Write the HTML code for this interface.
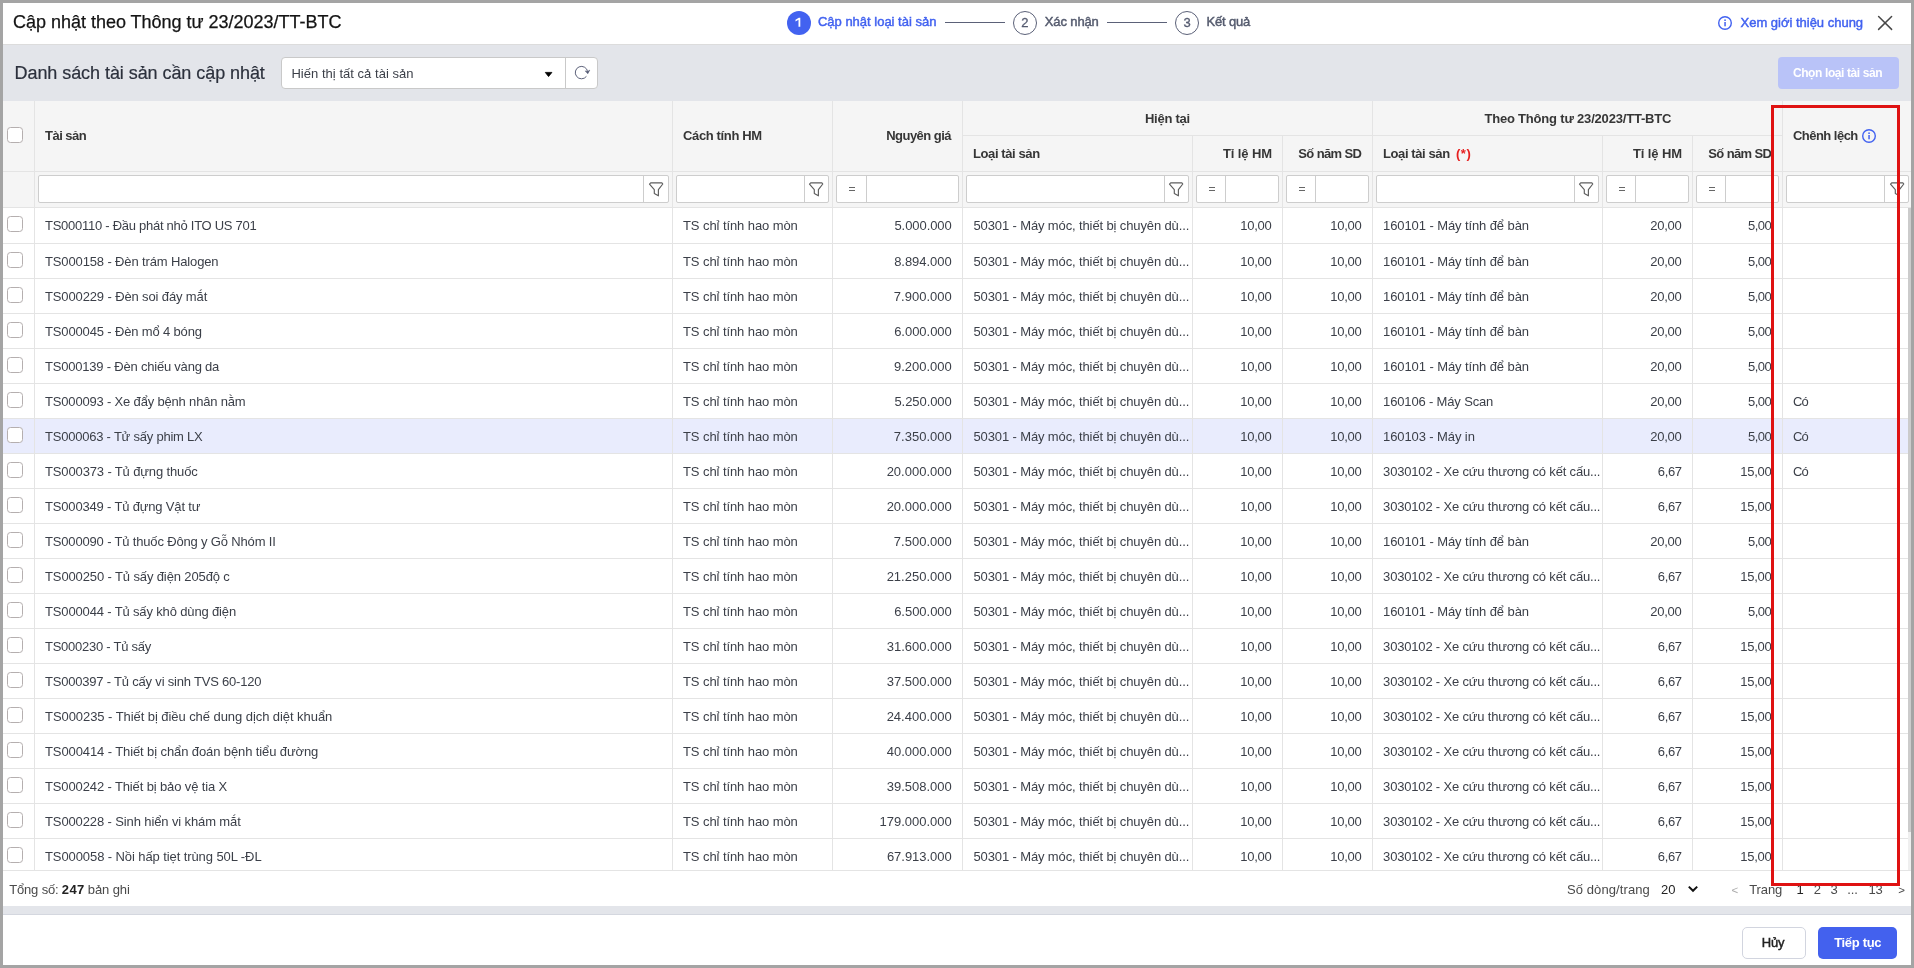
<!DOCTYPE html>
<html><head><meta charset="utf-8"><title>Cập nhật theo Thông tư 23/2023/TT-BTC</title>
<style>
html,body{margin:0;padding:0;}
body{width:1914px;height:968px;position:relative;overflow:hidden;background:#fff;font-family:"Liberation Sans",sans-serif;}
#root{position:absolute;left:0;top:0;width:1914px;height:968px;overflow:hidden;will-change:transform;}
.b{position:absolute;box-sizing:content-box;}
.t{position:absolute;white-space:pre;font-family:"Liberation Sans",sans-serif;}
</style></head><body><div id="root">
<div class="b" style="left:0px;top:0px;width:1914px;height:968px;background:#a4a4a4;"></div>
<div class="b" style="left:3px;top:3px;width:1908px;height:962px;background:#fff;"></div>
<div class="b" style="left:3px;top:44px;width:1908px;height:1px;background:#dcdcdc;"></div>
<div class="b" style="left:3px;top:45px;width:1908px;height:56px;background:#e3e5ea;"></div>
<div class="b" style="left:3px;top:101px;width:1908px;height:107px;background:#f5f5f5;"></div>
<div class="b" style="left:3px;top:906px;width:1908px;height:9px;background:#e3e5ea;"></div>
<div class="b" style="left:3px;top:914px;width:1908px;height:1px;background:#d4d7df;"></div>
<span class="t" style="left:12.99px;top:9.76px;font-size:18px;line-height:24px;font-weight:normal;color:#141414;letter-spacing:-0.013px;-webkit-text-stroke:0.25px #141414;">Cập nhật theo Thông tư 23/2023/TT-BTC</span>
<span class="t" style="left:14.52px;top:60.76px;font-size:18px;line-height:24px;font-weight:normal;color:#2c313d;letter-spacing:-0.063px;-webkit-text-stroke:0.2px #2c313d;">Danh sách tài sản cần cập nhật</span>
<div class="b" style="left:787px;top:11px;width:24px;height:24px;border-radius:12px;background:#4262f0;"></div>
<svg class="b" style="left:790px;top:12px" width="20" height="20" viewBox="790 12 20 20"><path d="M795.5 19.8 L798.8 17.8 L800.3 17.8 L800.3 26.8 L798.5 26.8 L798.5 19.8 L795.5 21.4 Z" fill="#fff"/></svg>
<span class="t" style="left:817.94px;top:11.70px;font-size:13px;line-height:19px;font-weight:normal;color:#4262f0;letter-spacing:-0.003px;-webkit-text-stroke:0.45px #4262f0;">Cập nhật loại tài sản</span>
<div class="b" style="left:945px;top:22px;width:60px;height:1px;background:#5b6178;"></div>
<div class="b" style="left:1013px;top:11px;width:22px;height:22px;border-radius:12px;border:1px solid #5b6178;"></div>
<span class="t" style="left:1021.15px;top:13.00px;font-size:13px;line-height:19px;font-weight:normal;color:#555b70;letter-spacing:0.000px;-webkit-text-stroke:0.3px #555b70;">2</span>
<span class="t" style="left:1044.71px;top:11.70px;font-size:13px;line-height:19px;font-weight:normal;color:#555b6e;letter-spacing:-0.114px;-webkit-text-stroke:0.45px #555b6e;">Xác nhận</span>
<div class="b" style="left:1107px;top:22px;width:60px;height:1px;background:#5b6178;"></div>
<div class="b" style="left:1175px;top:11px;width:22px;height:22px;border-radius:12px;border:1px solid #5b6178;"></div>
<span class="t" style="left:1183.44px;top:13.00px;font-size:13px;line-height:19px;font-weight:normal;color:#555b70;letter-spacing:0.000px;-webkit-text-stroke:0.3px #555b70;">3</span>
<span class="t" style="left:1206.53px;top:11.70px;font-size:13px;line-height:19px;font-weight:normal;color:#555b6e;letter-spacing:-0.174px;-webkit-text-stroke:0.45px #555b6e;">Kết quả</span>
<svg class="b" style="left:1717px;top:15px" width="16" height="16" viewBox="0 0 16 16"><circle cx="8" cy="8" r="6.3" fill="none" stroke="#4262f0" stroke-width="1.4"/><rect x="7.3" y="7" width="1.5" height="4.3" fill="#4262f0"/><rect x="7.3" y="4.4" width="1.5" height="1.6" fill="#4262f0"/></svg>
<span class="t" style="left:1740.51px;top:12.80px;font-size:13px;line-height:19px;font-weight:normal;color:#4262f0;letter-spacing:-0.006px;-webkit-text-stroke:0.45px #4262f0;">Xem giới thiệu chung</span>
<svg class="b" style="left:1877px;top:15px" width="16" height="16" viewBox="0 0 16 16"><path d="M1.6 1.5 L14.6 14.4 M14.6 1.5 L1.6 14.4" stroke="#484848" stroke-width="1.5" stroke-linecap="round" fill="none"/></svg>
<div class="b" style="left:281px;top:57px;width:315px;height:30px;background:#fff;border:1px solid #c9c9c9;border-radius:4px;"></div>
<div class="b" style="left:565px;top:58px;width:1px;height:30px;background:#c9c9c9;"></div>
<span class="t" style="left:291.43px;top:63.80px;font-size:13px;line-height:19px;font-weight:normal;color:#3b3f48;letter-spacing:0.030px;">Hiến thị tất cả tài sản</span>
<svg class="b" style="left:544px;top:71px" width="10" height="7" viewBox="0 0 10 7"><path d="M1.3 1.4 L7.9 1.4 L4.55 5.6 Z" fill="#000" stroke="#000" stroke-width="0.8" stroke-linejoin="round"/></svg>
<svg class="b" style="left:573px;top:64px" width="18" height="18" viewBox="0 0 18 18"><path d="M13.45 12.33 A6.2 6.2 0 1 1 14.64 7.74" fill="none" stroke="#535972" stroke-width="0.95"/><path d="M12.2 6.9 L14.8 9.8 L16.8 6.1 L14.6 7.5 Z" fill="#535972" stroke="#535972" stroke-width="0.5" stroke-linejoin="round"/></svg>
<div class="b" style="left:1778px;top:57px;width:121px;height:32px;background:#b9c3f8;border-radius:4px;"></div>
<span class="t" style="left:1792.91px;top:64.14px;font-size:12px;line-height:18px;font-weight:bold;color:#fff;letter-spacing:-0.392px;">Chọn loại tài sản</span>
<div class="b" style="left:3px;top:419px;width:1908px;height:34px;background:#e9ecfd;"></div>
<div class="b" style="left:34px;top:101px;width:1px;height:770px;background:#e4e4e4;"></div>
<div class="b" style="left:672px;top:101px;width:1px;height:770px;background:#e4e4e4;"></div>
<div class="b" style="left:832px;top:101px;width:1px;height:770px;background:#e4e4e4;"></div>
<div class="b" style="left:962px;top:101px;width:1px;height:770px;background:#e4e4e4;"></div>
<div class="b" style="left:1192px;top:136px;width:1px;height:735px;background:#e4e4e4;"></div>
<div class="b" style="left:1282px;top:136px;width:1px;height:735px;background:#e4e4e4;"></div>
<div class="b" style="left:1372px;top:101px;width:1px;height:770px;background:#e4e4e4;"></div>
<div class="b" style="left:1602px;top:136px;width:1px;height:735px;background:#e4e4e4;"></div>
<div class="b" style="left:1692px;top:136px;width:1px;height:735px;background:#e4e4e4;"></div>
<div class="b" style="left:1782px;top:101px;width:1px;height:770px;background:#e4e4e4;"></div>
<div class="b" style="left:962px;top:135px;width:820px;height:1px;background:#e4e4e4;"></div>
<div class="b" style="left:3px;top:171px;width:1908px;height:1px;background:#e4e4e4;"></div>
<div class="b" style="left:3px;top:207px;width:1908px;height:1px;background:#e4e4e4;"></div>
<div class="b" style="left:3px;top:243px;width:1908px;height:1px;background:#e4e4e4;"></div>
<div class="b" style="left:3px;top:278px;width:1908px;height:1px;background:#e4e4e4;"></div>
<div class="b" style="left:3px;top:313px;width:1908px;height:1px;background:#e4e4e4;"></div>
<div class="b" style="left:3px;top:348px;width:1908px;height:1px;background:#e4e4e4;"></div>
<div class="b" style="left:3px;top:383px;width:1908px;height:1px;background:#e4e4e4;"></div>
<div class="b" style="left:3px;top:418px;width:1908px;height:1px;background:#e4e4e4;"></div>
<div class="b" style="left:3px;top:453px;width:1908px;height:1px;background:#e4e4e4;"></div>
<div class="b" style="left:3px;top:488px;width:1908px;height:1px;background:#e4e4e4;"></div>
<div class="b" style="left:3px;top:523px;width:1908px;height:1px;background:#e4e4e4;"></div>
<div class="b" style="left:3px;top:558px;width:1908px;height:1px;background:#e4e4e4;"></div>
<div class="b" style="left:3px;top:593px;width:1908px;height:1px;background:#e4e4e4;"></div>
<div class="b" style="left:3px;top:628px;width:1908px;height:1px;background:#e4e4e4;"></div>
<div class="b" style="left:3px;top:663px;width:1908px;height:1px;background:#e4e4e4;"></div>
<div class="b" style="left:3px;top:698px;width:1908px;height:1px;background:#e4e4e4;"></div>
<div class="b" style="left:3px;top:733px;width:1908px;height:1px;background:#e4e4e4;"></div>
<div class="b" style="left:3px;top:768px;width:1908px;height:1px;background:#e4e4e4;"></div>
<div class="b" style="left:3px;top:803px;width:1908px;height:1px;background:#e4e4e4;"></div>
<div class="b" style="left:3px;top:838px;width:1908px;height:1px;background:#e4e4e4;"></div>
<div class="b" style="left:3px;top:870px;width:1908px;height:1px;background:#e4e4e4;"></div>
<div class="b" style="left:7px;top:127px;width:14px;height:14px;background:#fff;border:1px solid #b5afaf;border-radius:3.5px;"></div>
<span class="t" style="left:45.11px;top:126.00px;font-size:13px;line-height:19px;font-weight:bold;color:#363636;letter-spacing:-0.536px;">Tài sản</span>
<span class="t" style="left:683.01px;top:126.00px;font-size:13px;line-height:19px;font-weight:bold;color:#363636;letter-spacing:-0.356px;">Cách tính HM</span>
<span class="t" style="left:886.22px;top:126.00px;font-size:13px;line-height:19px;font-weight:bold;color:#363636;letter-spacing:-0.528px;">Nguyên giá</span>
<span class="t" style="left:1144.90px;top:109.00px;font-size:13px;line-height:19px;font-weight:bold;color:#363636;letter-spacing:-0.242px;">Hiện tại</span>
<span class="t" style="left:1484.38px;top:109.00px;font-size:13px;line-height:19px;font-weight:bold;color:#363636;letter-spacing:-0.189px;">Theo Thông tư 23/2023/TT-BTC</span>
<span class="t" style="left:972.96px;top:144.00px;font-size:13px;line-height:19px;font-weight:bold;color:#363636;letter-spacing:-0.393px;">Loại tài sản</span>
<span class="t" style="left:1222.98px;top:144.00px;font-size:13px;line-height:19px;font-weight:bold;color:#363636;letter-spacing:-0.113px;">Tỉ lệ HM</span>
<span class="t" style="left:1298.30px;top:144.00px;font-size:13px;line-height:19px;font-weight:bold;color:#363636;letter-spacing:-0.617px;">Số năm SD</span>
<span class="t" style="left:1382.96px;top:144.00px;font-size:13px;line-height:19px;font-weight:bold;color:#363636;letter-spacing:-0.393px;">Loại tài sản</span>
<span class="t" style="left:1455.95px;top:144.00px;font-size:13px;line-height:19px;font-weight:bold;color:#e62020;letter-spacing:0.559px;">(*)</span>
<span class="t" style="left:1632.98px;top:144.00px;font-size:13px;line-height:19px;font-weight:bold;color:#363636;letter-spacing:-0.113px;">Tỉ lệ HM</span>
<span class="t" style="left:1708.30px;top:144.00px;font-size:13px;line-height:19px;font-weight:bold;color:#363636;letter-spacing:-0.617px;">Số năm SD</span>
<span class="t" style="left:1793.01px;top:126.00px;font-size:13px;line-height:19px;font-weight:bold;color:#363636;letter-spacing:-0.533px;">Chênh lệch</span>
<svg class="b" style="left:1861px;top:128px" width="16" height="16" viewBox="0 0 16 16"><circle cx="8" cy="8" r="6.3" fill="none" stroke="#4262f0" stroke-width="1.4"/><rect x="7.3" y="7" width="1.5" height="4.3" fill="#4262f0"/><rect x="7.3" y="4.4" width="1.5" height="1.6" fill="#4262f0"/></svg>
<div class="b" style="left:38px;top:175px;width:629px;height:26px;background:#fff;border:1px solid #cdcdcd;border-radius:2px;"></div>
<div class="b" style="left:643px;top:176px;width:1px;height:26px;background:#cdcdcd;"></div>
<svg class="b" style="left:648px;top:181px" width="16" height="16" viewBox="0 0 16 16"><path d="M1.5 3.1 L2.7 1.9 L13.9 1.9 L14.8 3 L10.4 8.6 L10.4 14.8 L6.3 12.5 L6.3 8.6 Z" fill="none" stroke="#5e5e5e" stroke-width="1.15" stroke-linejoin="round"/></svg>
<div class="b" style="left:676px;top:175px;width:151px;height:26px;background:#fff;border:1px solid #cdcdcd;border-radius:2px;"></div>
<div class="b" style="left:804px;top:176px;width:1px;height:26px;background:#cdcdcd;"></div>
<svg class="b" style="left:808px;top:181px" width="16" height="16" viewBox="0 0 16 16"><path d="M1.5 3.1 L2.7 1.9 L13.9 1.9 L14.8 3 L10.4 8.6 L10.4 14.8 L6.3 12.5 L6.3 8.6 Z" fill="none" stroke="#5e5e5e" stroke-width="1.15" stroke-linejoin="round"/></svg>
<div class="b" style="left:836px;top:175px;width:121px;height:26px;background:#fff;border:1px solid #cdcdcd;border-radius:2px;"></div>
<div class="b" style="left:866px;top:176px;width:1px;height:26px;background:#cdcdcd;"></div>
<div class="b" style="left:849px;top:187.4px;width:5.5px;height:1.1px;background:#666;"></div>
<div class="b" style="left:849px;top:189.9px;width:5.5px;height:1.1px;background:#666;"></div>
<div class="b" style="left:966px;top:175px;width:221px;height:26px;background:#fff;border:1px solid #cdcdcd;border-radius:2px;"></div>
<div class="b" style="left:1164px;top:176px;width:1px;height:26px;background:#cdcdcd;"></div>
<svg class="b" style="left:1168px;top:181px" width="16" height="16" viewBox="0 0 16 16"><path d="M1.5 3.1 L2.7 1.9 L13.9 1.9 L14.8 3 L10.4 8.6 L10.4 14.8 L6.3 12.5 L6.3 8.6 Z" fill="none" stroke="#5e5e5e" stroke-width="1.15" stroke-linejoin="round"/></svg>
<div class="b" style="left:1196px;top:175px;width:81px;height:26px;background:#fff;border:1px solid #cdcdcd;border-radius:2px;"></div>
<div class="b" style="left:1225px;top:176px;width:1px;height:26px;background:#cdcdcd;"></div>
<div class="b" style="left:1209px;top:187.4px;width:5.5px;height:1.1px;background:#666;"></div>
<div class="b" style="left:1209px;top:189.9px;width:5.5px;height:1.1px;background:#666;"></div>
<div class="b" style="left:1286px;top:175px;width:81px;height:26px;background:#fff;border:1px solid #cdcdcd;border-radius:2px;"></div>
<div class="b" style="left:1315px;top:176px;width:1px;height:26px;background:#cdcdcd;"></div>
<div class="b" style="left:1299px;top:187.4px;width:5.5px;height:1.1px;background:#666;"></div>
<div class="b" style="left:1299px;top:189.9px;width:5.5px;height:1.1px;background:#666;"></div>
<div class="b" style="left:1376px;top:175px;width:221px;height:26px;background:#fff;border:1px solid #cdcdcd;border-radius:2px;"></div>
<div class="b" style="left:1574px;top:176px;width:1px;height:26px;background:#cdcdcd;"></div>
<svg class="b" style="left:1578px;top:181px" width="16" height="16" viewBox="0 0 16 16"><path d="M1.5 3.1 L2.7 1.9 L13.9 1.9 L14.8 3 L10.4 8.6 L10.4 14.8 L6.3 12.5 L6.3 8.6 Z" fill="none" stroke="#5e5e5e" stroke-width="1.15" stroke-linejoin="round"/></svg>
<div class="b" style="left:1606px;top:175px;width:81px;height:26px;background:#fff;border:1px solid #cdcdcd;border-radius:2px;"></div>
<div class="b" style="left:1635px;top:176px;width:1px;height:26px;background:#cdcdcd;"></div>
<div class="b" style="left:1619px;top:187.4px;width:5.5px;height:1.1px;background:#666;"></div>
<div class="b" style="left:1619px;top:189.9px;width:5.5px;height:1.1px;background:#666;"></div>
<div class="b" style="left:1696px;top:175px;width:81px;height:26px;background:#fff;border:1px solid #cdcdcd;border-radius:2px;"></div>
<div class="b" style="left:1725px;top:176px;width:1px;height:26px;background:#cdcdcd;"></div>
<div class="b" style="left:1709px;top:187.4px;width:5.5px;height:1.1px;background:#666;"></div>
<div class="b" style="left:1709px;top:189.9px;width:5.5px;height:1.1px;background:#666;"></div>
<div class="b" style="left:1786px;top:175px;width:121px;height:26px;background:#fff;border:1px solid #cdcdcd;border-radius:2px;"></div>
<div class="b" style="left:1884px;top:176px;width:1px;height:26px;background:#cdcdcd;"></div>
<svg class="b" style="left:1889px;top:181px" width="16" height="16" viewBox="0 0 16 16"><path d="M1.5 3.1 L2.7 1.9 L13.9 1.9 L14.8 3 L10.4 8.6 L10.4 14.8 L6.3 12.5 L6.3 8.6 Z" fill="none" stroke="#5e5e5e" stroke-width="1.15" stroke-linejoin="round"/></svg>
<div class="b" style="left:7px;top:216px;width:14px;height:14px;background:#fff;border:1px solid #b5afaf;border-radius:3.5px;"></div>
<span class="t" style="left:45.03px;top:216.00px;font-size:13px;line-height:19px;font-weight:normal;color:#3b3f48;letter-spacing:-0.270px;">TS000110 - Đầu phát nhỏ ITO US 701</span>
<span class="t" style="left:683.03px;top:216.00px;font-size:13px;line-height:19px;font-weight:normal;color:#3b3f48;letter-spacing:-0.084px;">TS chỉ tính hao mòn</span>
<span class="t" style="left:894.46px;top:216.00px;font-size:13px;line-height:19px;font-weight:normal;color:#3b3f48;letter-spacing:-0.065px;">5.000.000</span>
<span class="t" style="left:973.46px;top:216.00px;font-size:13px;line-height:19px;font-weight:normal;color:#3b3f48;letter-spacing:-0.123px;">50301 - Máy móc, thiết bị chuyên dù...</span>
<span class="t" style="left:1240.31px;top:216.00px;font-size:13px;line-height:19px;font-weight:normal;color:#3b3f48;letter-spacing:-0.268px;">10,00</span>
<span class="t" style="left:1330.31px;top:216.00px;font-size:13px;line-height:19px;font-weight:normal;color:#3b3f48;letter-spacing:-0.268px;">10,00</span>
<span class="t" style="left:1383.10px;top:216.00px;font-size:13px;line-height:19px;font-weight:normal;color:#3b3f48;letter-spacing:-0.098px;">160101 - Máy tính để bàn</span>
<span class="t" style="left:1650.16px;top:216.00px;font-size:13px;line-height:19px;font-weight:normal;color:#3b3f48;letter-spacing:-0.230px;">20,00</span>
<span class="t" style="left:1747.98px;top:216.00px;font-size:13px;line-height:19px;font-weight:normal;color:#3b3f48;letter-spacing:-0.504px;">5,00</span>
<div class="b" style="left:7px;top:252px;width:14px;height:14px;background:#fff;border:1px solid #b5afaf;border-radius:3.5px;"></div>
<span class="t" style="left:45.03px;top:252.00px;font-size:13px;line-height:19px;font-weight:normal;color:#3b3f48;letter-spacing:-0.133px;">TS000158 - Đèn trám Halogen</span>
<span class="t" style="left:683.03px;top:252.00px;font-size:13px;line-height:19px;font-weight:normal;color:#3b3f48;letter-spacing:-0.084px;">TS chỉ tính hao mòn</span>
<span class="t" style="left:894.14px;top:252.00px;font-size:13px;line-height:19px;font-weight:normal;color:#3b3f48;letter-spacing:-0.026px;">8.894.000</span>
<span class="t" style="left:973.46px;top:252.00px;font-size:13px;line-height:19px;font-weight:normal;color:#3b3f48;letter-spacing:-0.123px;">50301 - Máy móc, thiết bị chuyên dù...</span>
<span class="t" style="left:1240.31px;top:252.00px;font-size:13px;line-height:19px;font-weight:normal;color:#3b3f48;letter-spacing:-0.268px;">10,00</span>
<span class="t" style="left:1330.31px;top:252.00px;font-size:13px;line-height:19px;font-weight:normal;color:#3b3f48;letter-spacing:-0.268px;">10,00</span>
<span class="t" style="left:1383.10px;top:252.00px;font-size:13px;line-height:19px;font-weight:normal;color:#3b3f48;letter-spacing:-0.098px;">160101 - Máy tính để bàn</span>
<span class="t" style="left:1650.16px;top:252.00px;font-size:13px;line-height:19px;font-weight:normal;color:#3b3f48;letter-spacing:-0.230px;">20,00</span>
<span class="t" style="left:1747.98px;top:252.00px;font-size:13px;line-height:19px;font-weight:normal;color:#3b3f48;letter-spacing:-0.504px;">5,00</span>
<div class="b" style="left:7px;top:287px;width:14px;height:14px;background:#fff;border:1px solid #b5afaf;border-radius:3.5px;"></div>
<span class="t" style="left:45.03px;top:287.00px;font-size:13px;line-height:19px;font-weight:normal;color:#3b3f48;letter-spacing:-0.129px;">TS000229 - Đèn soi đáy mắt</span>
<span class="t" style="left:683.03px;top:287.00px;font-size:13px;line-height:19px;font-weight:normal;color:#3b3f48;letter-spacing:-0.084px;">TS chỉ tính hao mòn</span>
<span class="t" style="left:893.83px;top:287.00px;font-size:13px;line-height:19px;font-weight:normal;color:#3b3f48;letter-spacing:0.013px;">7.900.000</span>
<span class="t" style="left:973.46px;top:287.00px;font-size:13px;line-height:19px;font-weight:normal;color:#3b3f48;letter-spacing:-0.123px;">50301 - Máy móc, thiết bị chuyên dù...</span>
<span class="t" style="left:1240.31px;top:287.00px;font-size:13px;line-height:19px;font-weight:normal;color:#3b3f48;letter-spacing:-0.268px;">10,00</span>
<span class="t" style="left:1330.31px;top:287.00px;font-size:13px;line-height:19px;font-weight:normal;color:#3b3f48;letter-spacing:-0.268px;">10,00</span>
<span class="t" style="left:1383.10px;top:287.00px;font-size:13px;line-height:19px;font-weight:normal;color:#3b3f48;letter-spacing:-0.098px;">160101 - Máy tính để bàn</span>
<span class="t" style="left:1650.16px;top:287.00px;font-size:13px;line-height:19px;font-weight:normal;color:#3b3f48;letter-spacing:-0.230px;">20,00</span>
<span class="t" style="left:1747.98px;top:287.00px;font-size:13px;line-height:19px;font-weight:normal;color:#3b3f48;letter-spacing:-0.504px;">5,00</span>
<div class="b" style="left:7px;top:322px;width:14px;height:14px;background:#fff;border:1px solid #b5afaf;border-radius:3.5px;"></div>
<span class="t" style="left:45.03px;top:322.00px;font-size:13px;line-height:19px;font-weight:normal;color:#3b3f48;letter-spacing:-0.151px;">TS000045 - Đèn mổ 4 bóng</span>
<span class="t" style="left:683.03px;top:322.00px;font-size:13px;line-height:19px;font-weight:normal;color:#3b3f48;letter-spacing:-0.084px;">TS chỉ tính hao mòn</span>
<span class="t" style="left:894.18px;top:322.00px;font-size:13px;line-height:19px;font-weight:normal;color:#3b3f48;letter-spacing:-0.031px;">6.000.000</span>
<span class="t" style="left:973.46px;top:322.00px;font-size:13px;line-height:19px;font-weight:normal;color:#3b3f48;letter-spacing:-0.123px;">50301 - Máy móc, thiết bị chuyên dù...</span>
<span class="t" style="left:1240.31px;top:322.00px;font-size:13px;line-height:19px;font-weight:normal;color:#3b3f48;letter-spacing:-0.268px;">10,00</span>
<span class="t" style="left:1330.31px;top:322.00px;font-size:13px;line-height:19px;font-weight:normal;color:#3b3f48;letter-spacing:-0.268px;">10,00</span>
<span class="t" style="left:1383.10px;top:322.00px;font-size:13px;line-height:19px;font-weight:normal;color:#3b3f48;letter-spacing:-0.098px;">160101 - Máy tính để bàn</span>
<span class="t" style="left:1650.16px;top:322.00px;font-size:13px;line-height:19px;font-weight:normal;color:#3b3f48;letter-spacing:-0.230px;">20,00</span>
<span class="t" style="left:1747.98px;top:322.00px;font-size:13px;line-height:19px;font-weight:normal;color:#3b3f48;letter-spacing:-0.504px;">5,00</span>
<div class="b" style="left:7px;top:357px;width:14px;height:14px;background:#fff;border:1px solid #b5afaf;border-radius:3.5px;"></div>
<span class="t" style="left:45.03px;top:357.00px;font-size:13px;line-height:19px;font-weight:normal;color:#3b3f48;letter-spacing:-0.209px;">TS000139 - Đèn chiếu vàng da</span>
<span class="t" style="left:683.03px;top:357.00px;font-size:13px;line-height:19px;font-weight:normal;color:#3b3f48;letter-spacing:-0.084px;">TS chỉ tính hao mòn</span>
<span class="t" style="left:894.02px;top:357.00px;font-size:13px;line-height:19px;font-weight:normal;color:#3b3f48;letter-spacing:-0.011px;">9.200.000</span>
<span class="t" style="left:973.46px;top:357.00px;font-size:13px;line-height:19px;font-weight:normal;color:#3b3f48;letter-spacing:-0.123px;">50301 - Máy móc, thiết bị chuyên dù...</span>
<span class="t" style="left:1240.31px;top:357.00px;font-size:13px;line-height:19px;font-weight:normal;color:#3b3f48;letter-spacing:-0.268px;">10,00</span>
<span class="t" style="left:1330.31px;top:357.00px;font-size:13px;line-height:19px;font-weight:normal;color:#3b3f48;letter-spacing:-0.268px;">10,00</span>
<span class="t" style="left:1383.10px;top:357.00px;font-size:13px;line-height:19px;font-weight:normal;color:#3b3f48;letter-spacing:-0.098px;">160101 - Máy tính để bàn</span>
<span class="t" style="left:1650.16px;top:357.00px;font-size:13px;line-height:19px;font-weight:normal;color:#3b3f48;letter-spacing:-0.230px;">20,00</span>
<span class="t" style="left:1747.98px;top:357.00px;font-size:13px;line-height:19px;font-weight:normal;color:#3b3f48;letter-spacing:-0.504px;">5,00</span>
<div class="b" style="left:7px;top:392px;width:14px;height:14px;background:#fff;border:1px solid #b5afaf;border-radius:3.5px;"></div>
<span class="t" style="left:45.03px;top:392.00px;font-size:13px;line-height:19px;font-weight:normal;color:#3b3f48;letter-spacing:-0.178px;">TS000093 - Xe đẩy bệnh nhân nằm</span>
<span class="t" style="left:683.03px;top:392.00px;font-size:13px;line-height:19px;font-weight:normal;color:#3b3f48;letter-spacing:-0.084px;">TS chỉ tính hao mòn</span>
<span class="t" style="left:894.46px;top:392.00px;font-size:13px;line-height:19px;font-weight:normal;color:#3b3f48;letter-spacing:-0.065px;">5.250.000</span>
<span class="t" style="left:973.46px;top:392.00px;font-size:13px;line-height:19px;font-weight:normal;color:#3b3f48;letter-spacing:-0.123px;">50301 - Máy móc, thiết bị chuyên dù...</span>
<span class="t" style="left:1240.31px;top:392.00px;font-size:13px;line-height:19px;font-weight:normal;color:#3b3f48;letter-spacing:-0.268px;">10,00</span>
<span class="t" style="left:1330.31px;top:392.00px;font-size:13px;line-height:19px;font-weight:normal;color:#3b3f48;letter-spacing:-0.268px;">10,00</span>
<span class="t" style="left:1383.10px;top:392.00px;font-size:13px;line-height:19px;font-weight:normal;color:#3b3f48;letter-spacing:-0.157px;">160106 - Máy Scan</span>
<span class="t" style="left:1650.16px;top:392.00px;font-size:13px;line-height:19px;font-weight:normal;color:#3b3f48;letter-spacing:-0.230px;">20,00</span>
<span class="t" style="left:1747.98px;top:392.00px;font-size:13px;line-height:19px;font-weight:normal;color:#3b3f48;letter-spacing:-0.504px;">5,00</span>
<span class="t" style="left:1793.10px;top:392.00px;font-size:13px;line-height:19px;font-weight:normal;color:#3b3f48;letter-spacing:-0.876px;">Có</span>
<div class="b" style="left:7px;top:427px;width:14px;height:14px;background:#fff;border:1px solid #b5afaf;border-radius:3.5px;"></div>
<span class="t" style="left:45.03px;top:427.00px;font-size:13px;line-height:19px;font-weight:normal;color:#3b3f48;letter-spacing:-0.222px;">TS000063 - Tử sấy phim LX</span>
<span class="t" style="left:683.03px;top:427.00px;font-size:13px;line-height:19px;font-weight:normal;color:#3b3f48;letter-spacing:-0.084px;">TS chỉ tính hao mòn</span>
<span class="t" style="left:893.83px;top:427.00px;font-size:13px;line-height:19px;font-weight:normal;color:#3b3f48;letter-spacing:0.013px;">7.350.000</span>
<span class="t" style="left:973.46px;top:427.00px;font-size:13px;line-height:19px;font-weight:normal;color:#3b3f48;letter-spacing:-0.123px;">50301 - Máy móc, thiết bị chuyên dù...</span>
<span class="t" style="left:1240.31px;top:427.00px;font-size:13px;line-height:19px;font-weight:normal;color:#3b3f48;letter-spacing:-0.268px;">10,00</span>
<span class="t" style="left:1330.31px;top:427.00px;font-size:13px;line-height:19px;font-weight:normal;color:#3b3f48;letter-spacing:-0.268px;">10,00</span>
<span class="t" style="left:1383.10px;top:427.00px;font-size:13px;line-height:19px;font-weight:normal;color:#3b3f48;letter-spacing:-0.103px;">160103 - Máy in</span>
<span class="t" style="left:1650.16px;top:427.00px;font-size:13px;line-height:19px;font-weight:normal;color:#3b3f48;letter-spacing:-0.230px;">20,00</span>
<span class="t" style="left:1747.98px;top:427.00px;font-size:13px;line-height:19px;font-weight:normal;color:#3b3f48;letter-spacing:-0.504px;">5,00</span>
<span class="t" style="left:1793.10px;top:427.00px;font-size:13px;line-height:19px;font-weight:normal;color:#3b3f48;letter-spacing:-0.876px;">Có</span>
<div class="b" style="left:7px;top:462px;width:14px;height:14px;background:#fff;border:1px solid #b5afaf;border-radius:3.5px;"></div>
<span class="t" style="left:45.03px;top:462.00px;font-size:13px;line-height:19px;font-weight:normal;color:#3b3f48;letter-spacing:-0.137px;">TS000373 - Tủ đựng thuốc</span>
<span class="t" style="left:683.03px;top:462.00px;font-size:13px;line-height:19px;font-weight:normal;color:#3b3f48;letter-spacing:-0.084px;">TS chỉ tính hao mòn</span>
<span class="t" style="left:886.63px;top:462.00px;font-size:13px;line-height:19px;font-weight:normal;color:#3b3f48;letter-spacing:0.008px;">20.000.000</span>
<span class="t" style="left:973.46px;top:462.00px;font-size:13px;line-height:19px;font-weight:normal;color:#3b3f48;letter-spacing:-0.123px;">50301 - Máy móc, thiết bị chuyên dù...</span>
<span class="t" style="left:1240.31px;top:462.00px;font-size:13px;line-height:19px;font-weight:normal;color:#3b3f48;letter-spacing:-0.268px;">10,00</span>
<span class="t" style="left:1330.31px;top:462.00px;font-size:13px;line-height:19px;font-weight:normal;color:#3b3f48;letter-spacing:-0.268px;">10,00</span>
<span class="t" style="left:1383.11px;top:462.00px;font-size:13px;line-height:19px;font-weight:normal;color:#3b3f48;letter-spacing:-0.184px;">3030102 - Xe cứu thương có kết cấu...</span>
<span class="t" style="left:1657.71px;top:462.00px;font-size:13px;line-height:19px;font-weight:normal;color:#3b3f48;letter-spacing:-0.307px;">6,67</span>
<span class="t" style="left:1740.31px;top:462.00px;font-size:13px;line-height:19px;font-weight:normal;color:#3b3f48;letter-spacing:-0.268px;">15,00</span>
<span class="t" style="left:1793.10px;top:462.00px;font-size:13px;line-height:19px;font-weight:normal;color:#3b3f48;letter-spacing:-0.876px;">Có</span>
<div class="b" style="left:7px;top:497px;width:14px;height:14px;background:#fff;border:1px solid #b5afaf;border-radius:3.5px;"></div>
<span class="t" style="left:45.03px;top:497.00px;font-size:13px;line-height:19px;font-weight:normal;color:#3b3f48;letter-spacing:-0.171px;">TS000349 - Tủ đựng Vật tư</span>
<span class="t" style="left:683.03px;top:497.00px;font-size:13px;line-height:19px;font-weight:normal;color:#3b3f48;letter-spacing:-0.084px;">TS chỉ tính hao mòn</span>
<span class="t" style="left:886.63px;top:497.00px;font-size:13px;line-height:19px;font-weight:normal;color:#3b3f48;letter-spacing:0.008px;">20.000.000</span>
<span class="t" style="left:973.46px;top:497.00px;font-size:13px;line-height:19px;font-weight:normal;color:#3b3f48;letter-spacing:-0.123px;">50301 - Máy móc, thiết bị chuyên dù...</span>
<span class="t" style="left:1240.31px;top:497.00px;font-size:13px;line-height:19px;font-weight:normal;color:#3b3f48;letter-spacing:-0.268px;">10,00</span>
<span class="t" style="left:1330.31px;top:497.00px;font-size:13px;line-height:19px;font-weight:normal;color:#3b3f48;letter-spacing:-0.268px;">10,00</span>
<span class="t" style="left:1383.11px;top:497.00px;font-size:13px;line-height:19px;font-weight:normal;color:#3b3f48;letter-spacing:-0.184px;">3030102 - Xe cứu thương có kết cấu...</span>
<span class="t" style="left:1657.71px;top:497.00px;font-size:13px;line-height:19px;font-weight:normal;color:#3b3f48;letter-spacing:-0.307px;">6,67</span>
<span class="t" style="left:1740.31px;top:497.00px;font-size:13px;line-height:19px;font-weight:normal;color:#3b3f48;letter-spacing:-0.268px;">15,00</span>
<div class="b" style="left:7px;top:532px;width:14px;height:14px;background:#fff;border:1px solid #b5afaf;border-radius:3.5px;"></div>
<span class="t" style="left:45.03px;top:532.00px;font-size:13px;line-height:19px;font-weight:normal;color:#3b3f48;letter-spacing:-0.165px;">TS000090 - Tủ thuốc Đông y Gỗ Nhóm II</span>
<span class="t" style="left:683.03px;top:532.00px;font-size:13px;line-height:19px;font-weight:normal;color:#3b3f48;letter-spacing:-0.084px;">TS chỉ tính hao mòn</span>
<span class="t" style="left:893.83px;top:532.00px;font-size:13px;line-height:19px;font-weight:normal;color:#3b3f48;letter-spacing:0.013px;">7.500.000</span>
<span class="t" style="left:973.46px;top:532.00px;font-size:13px;line-height:19px;font-weight:normal;color:#3b3f48;letter-spacing:-0.123px;">50301 - Máy móc, thiết bị chuyên dù...</span>
<span class="t" style="left:1240.31px;top:532.00px;font-size:13px;line-height:19px;font-weight:normal;color:#3b3f48;letter-spacing:-0.268px;">10,00</span>
<span class="t" style="left:1330.31px;top:532.00px;font-size:13px;line-height:19px;font-weight:normal;color:#3b3f48;letter-spacing:-0.268px;">10,00</span>
<span class="t" style="left:1383.10px;top:532.00px;font-size:13px;line-height:19px;font-weight:normal;color:#3b3f48;letter-spacing:-0.098px;">160101 - Máy tính để bàn</span>
<span class="t" style="left:1650.16px;top:532.00px;font-size:13px;line-height:19px;font-weight:normal;color:#3b3f48;letter-spacing:-0.230px;">20,00</span>
<span class="t" style="left:1747.98px;top:532.00px;font-size:13px;line-height:19px;font-weight:normal;color:#3b3f48;letter-spacing:-0.504px;">5,00</span>
<div class="b" style="left:7px;top:567px;width:14px;height:14px;background:#fff;border:1px solid #b5afaf;border-radius:3.5px;"></div>
<span class="t" style="left:45.03px;top:567.00px;font-size:13px;line-height:19px;font-weight:normal;color:#3b3f48;letter-spacing:-0.122px;">TS000250 - Tủ sấy điện 205độ c</span>
<span class="t" style="left:683.03px;top:567.00px;font-size:13px;line-height:19px;font-weight:normal;color:#3b3f48;letter-spacing:-0.084px;">TS chỉ tính hao mòn</span>
<span class="t" style="left:886.63px;top:567.00px;font-size:13px;line-height:19px;font-weight:normal;color:#3b3f48;letter-spacing:0.008px;">21.250.000</span>
<span class="t" style="left:973.46px;top:567.00px;font-size:13px;line-height:19px;font-weight:normal;color:#3b3f48;letter-spacing:-0.123px;">50301 - Máy móc, thiết bị chuyên dù...</span>
<span class="t" style="left:1240.31px;top:567.00px;font-size:13px;line-height:19px;font-weight:normal;color:#3b3f48;letter-spacing:-0.268px;">10,00</span>
<span class="t" style="left:1330.31px;top:567.00px;font-size:13px;line-height:19px;font-weight:normal;color:#3b3f48;letter-spacing:-0.268px;">10,00</span>
<span class="t" style="left:1383.11px;top:567.00px;font-size:13px;line-height:19px;font-weight:normal;color:#3b3f48;letter-spacing:-0.184px;">3030102 - Xe cứu thương có kết cấu...</span>
<span class="t" style="left:1657.71px;top:567.00px;font-size:13px;line-height:19px;font-weight:normal;color:#3b3f48;letter-spacing:-0.307px;">6,67</span>
<span class="t" style="left:1740.31px;top:567.00px;font-size:13px;line-height:19px;font-weight:normal;color:#3b3f48;letter-spacing:-0.268px;">15,00</span>
<div class="b" style="left:7px;top:602px;width:14px;height:14px;background:#fff;border:1px solid #b5afaf;border-radius:3.5px;"></div>
<span class="t" style="left:45.03px;top:602.00px;font-size:13px;line-height:19px;font-weight:normal;color:#3b3f48;letter-spacing:-0.150px;">TS000044 - Tủ sấy khô dùng điện</span>
<span class="t" style="left:683.03px;top:602.00px;font-size:13px;line-height:19px;font-weight:normal;color:#3b3f48;letter-spacing:-0.084px;">TS chỉ tính hao mòn</span>
<span class="t" style="left:894.18px;top:602.00px;font-size:13px;line-height:19px;font-weight:normal;color:#3b3f48;letter-spacing:-0.031px;">6.500.000</span>
<span class="t" style="left:973.46px;top:602.00px;font-size:13px;line-height:19px;font-weight:normal;color:#3b3f48;letter-spacing:-0.123px;">50301 - Máy móc, thiết bị chuyên dù...</span>
<span class="t" style="left:1240.31px;top:602.00px;font-size:13px;line-height:19px;font-weight:normal;color:#3b3f48;letter-spacing:-0.268px;">10,00</span>
<span class="t" style="left:1330.31px;top:602.00px;font-size:13px;line-height:19px;font-weight:normal;color:#3b3f48;letter-spacing:-0.268px;">10,00</span>
<span class="t" style="left:1383.10px;top:602.00px;font-size:13px;line-height:19px;font-weight:normal;color:#3b3f48;letter-spacing:-0.098px;">160101 - Máy tính để bàn</span>
<span class="t" style="left:1650.16px;top:602.00px;font-size:13px;line-height:19px;font-weight:normal;color:#3b3f48;letter-spacing:-0.230px;">20,00</span>
<span class="t" style="left:1747.98px;top:602.00px;font-size:13px;line-height:19px;font-weight:normal;color:#3b3f48;letter-spacing:-0.504px;">5,00</span>
<div class="b" style="left:7px;top:637px;width:14px;height:14px;background:#fff;border:1px solid #b5afaf;border-radius:3.5px;"></div>
<span class="t" style="left:45.03px;top:637.00px;font-size:13px;line-height:19px;font-weight:normal;color:#3b3f48;letter-spacing:-0.256px;">TS000230 - Tủ sấy</span>
<span class="t" style="left:683.03px;top:637.00px;font-size:13px;line-height:19px;font-weight:normal;color:#3b3f48;letter-spacing:-0.084px;">TS chỉ tính hao mòn</span>
<span class="t" style="left:886.80px;top:637.00px;font-size:13px;line-height:19px;font-weight:normal;color:#3b3f48;letter-spacing:-0.011px;">31.600.000</span>
<span class="t" style="left:973.46px;top:637.00px;font-size:13px;line-height:19px;font-weight:normal;color:#3b3f48;letter-spacing:-0.123px;">50301 - Máy móc, thiết bị chuyên dù...</span>
<span class="t" style="left:1240.31px;top:637.00px;font-size:13px;line-height:19px;font-weight:normal;color:#3b3f48;letter-spacing:-0.268px;">10,00</span>
<span class="t" style="left:1330.31px;top:637.00px;font-size:13px;line-height:19px;font-weight:normal;color:#3b3f48;letter-spacing:-0.268px;">10,00</span>
<span class="t" style="left:1383.11px;top:637.00px;font-size:13px;line-height:19px;font-weight:normal;color:#3b3f48;letter-spacing:-0.184px;">3030102 - Xe cứu thương có kết cấu...</span>
<span class="t" style="left:1657.71px;top:637.00px;font-size:13px;line-height:19px;font-weight:normal;color:#3b3f48;letter-spacing:-0.307px;">6,67</span>
<span class="t" style="left:1740.31px;top:637.00px;font-size:13px;line-height:19px;font-weight:normal;color:#3b3f48;letter-spacing:-0.268px;">15,00</span>
<div class="b" style="left:7px;top:672px;width:14px;height:14px;background:#fff;border:1px solid #b5afaf;border-radius:3.5px;"></div>
<span class="t" style="left:45.03px;top:672.00px;font-size:13px;line-height:19px;font-weight:normal;color:#3b3f48;letter-spacing:-0.201px;">TS000397 - Tủ cấy vi sinh TVS 60-120</span>
<span class="t" style="left:683.03px;top:672.00px;font-size:13px;line-height:19px;font-weight:normal;color:#3b3f48;letter-spacing:-0.084px;">TS chỉ tính hao mòn</span>
<span class="t" style="left:886.80px;top:672.00px;font-size:13px;line-height:19px;font-weight:normal;color:#3b3f48;letter-spacing:-0.011px;">37.500.000</span>
<span class="t" style="left:973.46px;top:672.00px;font-size:13px;line-height:19px;font-weight:normal;color:#3b3f48;letter-spacing:-0.123px;">50301 - Máy móc, thiết bị chuyên dù...</span>
<span class="t" style="left:1240.31px;top:672.00px;font-size:13px;line-height:19px;font-weight:normal;color:#3b3f48;letter-spacing:-0.268px;">10,00</span>
<span class="t" style="left:1330.31px;top:672.00px;font-size:13px;line-height:19px;font-weight:normal;color:#3b3f48;letter-spacing:-0.268px;">10,00</span>
<span class="t" style="left:1383.11px;top:672.00px;font-size:13px;line-height:19px;font-weight:normal;color:#3b3f48;letter-spacing:-0.184px;">3030102 - Xe cứu thương có kết cấu...</span>
<span class="t" style="left:1657.71px;top:672.00px;font-size:13px;line-height:19px;font-weight:normal;color:#3b3f48;letter-spacing:-0.307px;">6,67</span>
<span class="t" style="left:1740.31px;top:672.00px;font-size:13px;line-height:19px;font-weight:normal;color:#3b3f48;letter-spacing:-0.268px;">15,00</span>
<div class="b" style="left:7px;top:707px;width:14px;height:14px;background:#fff;border:1px solid #b5afaf;border-radius:3.5px;"></div>
<span class="t" style="left:45.03px;top:707.00px;font-size:13px;line-height:19px;font-weight:normal;color:#3b3f48;letter-spacing:-0.063px;">TS000235 - Thiết bị điều chế dung dịch diệt khuẩn</span>
<span class="t" style="left:683.03px;top:707.00px;font-size:13px;line-height:19px;font-weight:normal;color:#3b3f48;letter-spacing:-0.084px;">TS chỉ tính hao mòn</span>
<span class="t" style="left:886.63px;top:707.00px;font-size:13px;line-height:19px;font-weight:normal;color:#3b3f48;letter-spacing:0.008px;">24.400.000</span>
<span class="t" style="left:973.46px;top:707.00px;font-size:13px;line-height:19px;font-weight:normal;color:#3b3f48;letter-spacing:-0.123px;">50301 - Máy móc, thiết bị chuyên dù...</span>
<span class="t" style="left:1240.31px;top:707.00px;font-size:13px;line-height:19px;font-weight:normal;color:#3b3f48;letter-spacing:-0.268px;">10,00</span>
<span class="t" style="left:1330.31px;top:707.00px;font-size:13px;line-height:19px;font-weight:normal;color:#3b3f48;letter-spacing:-0.268px;">10,00</span>
<span class="t" style="left:1383.11px;top:707.00px;font-size:13px;line-height:19px;font-weight:normal;color:#3b3f48;letter-spacing:-0.184px;">3030102 - Xe cứu thương có kết cấu...</span>
<span class="t" style="left:1657.71px;top:707.00px;font-size:13px;line-height:19px;font-weight:normal;color:#3b3f48;letter-spacing:-0.307px;">6,67</span>
<span class="t" style="left:1740.31px;top:707.00px;font-size:13px;line-height:19px;font-weight:normal;color:#3b3f48;letter-spacing:-0.268px;">15,00</span>
<div class="b" style="left:7px;top:742px;width:14px;height:14px;background:#fff;border:1px solid #b5afaf;border-radius:3.5px;"></div>
<span class="t" style="left:45.03px;top:742.00px;font-size:13px;line-height:19px;font-weight:normal;color:#3b3f48;letter-spacing:-0.104px;">TS000414 - Thiết bị chẩn đoán bệnh tiểu đường</span>
<span class="t" style="left:683.03px;top:742.00px;font-size:13px;line-height:19px;font-weight:normal;color:#3b3f48;letter-spacing:-0.084px;">TS chỉ tính hao mòn</span>
<span class="t" style="left:886.73px;top:742.00px;font-size:13px;line-height:19px;font-weight:normal;color:#3b3f48;letter-spacing:-0.003px;">40.000.000</span>
<span class="t" style="left:973.46px;top:742.00px;font-size:13px;line-height:19px;font-weight:normal;color:#3b3f48;letter-spacing:-0.123px;">50301 - Máy móc, thiết bị chuyên dù...</span>
<span class="t" style="left:1240.31px;top:742.00px;font-size:13px;line-height:19px;font-weight:normal;color:#3b3f48;letter-spacing:-0.268px;">10,00</span>
<span class="t" style="left:1330.31px;top:742.00px;font-size:13px;line-height:19px;font-weight:normal;color:#3b3f48;letter-spacing:-0.268px;">10,00</span>
<span class="t" style="left:1383.11px;top:742.00px;font-size:13px;line-height:19px;font-weight:normal;color:#3b3f48;letter-spacing:-0.184px;">3030102 - Xe cứu thương có kết cấu...</span>
<span class="t" style="left:1657.71px;top:742.00px;font-size:13px;line-height:19px;font-weight:normal;color:#3b3f48;letter-spacing:-0.307px;">6,67</span>
<span class="t" style="left:1740.31px;top:742.00px;font-size:13px;line-height:19px;font-weight:normal;color:#3b3f48;letter-spacing:-0.268px;">15,00</span>
<div class="b" style="left:7px;top:777px;width:14px;height:14px;background:#fff;border:1px solid #b5afaf;border-radius:3.5px;"></div>
<span class="t" style="left:45.03px;top:777.00px;font-size:13px;line-height:19px;font-weight:normal;color:#3b3f48;letter-spacing:-0.128px;">TS000242 - Thiết bị bảo vệ tia X</span>
<span class="t" style="left:683.03px;top:777.00px;font-size:13px;line-height:19px;font-weight:normal;color:#3b3f48;letter-spacing:-0.084px;">TS chỉ tính hao mòn</span>
<span class="t" style="left:886.80px;top:777.00px;font-size:13px;line-height:19px;font-weight:normal;color:#3b3f48;letter-spacing:-0.011px;">39.508.000</span>
<span class="t" style="left:973.46px;top:777.00px;font-size:13px;line-height:19px;font-weight:normal;color:#3b3f48;letter-spacing:-0.123px;">50301 - Máy móc, thiết bị chuyên dù...</span>
<span class="t" style="left:1240.31px;top:777.00px;font-size:13px;line-height:19px;font-weight:normal;color:#3b3f48;letter-spacing:-0.268px;">10,00</span>
<span class="t" style="left:1330.31px;top:777.00px;font-size:13px;line-height:19px;font-weight:normal;color:#3b3f48;letter-spacing:-0.268px;">10,00</span>
<span class="t" style="left:1383.11px;top:777.00px;font-size:13px;line-height:19px;font-weight:normal;color:#3b3f48;letter-spacing:-0.184px;">3030102 - Xe cứu thương có kết cấu...</span>
<span class="t" style="left:1657.71px;top:777.00px;font-size:13px;line-height:19px;font-weight:normal;color:#3b3f48;letter-spacing:-0.307px;">6,67</span>
<span class="t" style="left:1740.31px;top:777.00px;font-size:13px;line-height:19px;font-weight:normal;color:#3b3f48;letter-spacing:-0.268px;">15,00</span>
<div class="b" style="left:7px;top:812px;width:14px;height:14px;background:#fff;border:1px solid #b5afaf;border-radius:3.5px;"></div>
<span class="t" style="left:45.03px;top:812.00px;font-size:13px;line-height:19px;font-weight:normal;color:#3b3f48;letter-spacing:-0.118px;">TS000228 - Sinh hiển vi khám mắt</span>
<span class="t" style="left:683.03px;top:812.00px;font-size:13px;line-height:19px;font-weight:normal;color:#3b3f48;letter-spacing:-0.084px;">TS chỉ tính hao mòn</span>
<span class="t" style="left:879.48px;top:812.00px;font-size:13px;line-height:19px;font-weight:normal;color:#3b3f48;letter-spacing:-0.001px;">179.000.000</span>
<span class="t" style="left:973.46px;top:812.00px;font-size:13px;line-height:19px;font-weight:normal;color:#3b3f48;letter-spacing:-0.123px;">50301 - Máy móc, thiết bị chuyên dù...</span>
<span class="t" style="left:1240.31px;top:812.00px;font-size:13px;line-height:19px;font-weight:normal;color:#3b3f48;letter-spacing:-0.268px;">10,00</span>
<span class="t" style="left:1330.31px;top:812.00px;font-size:13px;line-height:19px;font-weight:normal;color:#3b3f48;letter-spacing:-0.268px;">10,00</span>
<span class="t" style="left:1383.11px;top:812.00px;font-size:13px;line-height:19px;font-weight:normal;color:#3b3f48;letter-spacing:-0.184px;">3030102 - Xe cứu thương có kết cấu...</span>
<span class="t" style="left:1657.71px;top:812.00px;font-size:13px;line-height:19px;font-weight:normal;color:#3b3f48;letter-spacing:-0.307px;">6,67</span>
<span class="t" style="left:1740.31px;top:812.00px;font-size:13px;line-height:19px;font-weight:normal;color:#3b3f48;letter-spacing:-0.268px;">15,00</span>
<div class="b" style="left:7px;top:847px;width:14px;height:14px;background:#fff;border:1px solid #b5afaf;border-radius:3.5px;"></div>
<span class="t" style="left:45.03px;top:847.00px;font-size:13px;line-height:19px;font-weight:normal;color:#3b3f48;letter-spacing:-0.092px;">TS000058 - Nồi hấp tiẹt trùng 50L -ĐL</span>
<span class="t" style="left:683.03px;top:847.00px;font-size:13px;line-height:19px;font-weight:normal;color:#3b3f48;letter-spacing:-0.084px;">TS chỉ tính hao mòn</span>
<span class="t" style="left:886.88px;top:847.00px;font-size:13px;line-height:19px;font-weight:normal;color:#3b3f48;letter-spacing:-0.019px;">67.913.000</span>
<span class="t" style="left:973.46px;top:847.00px;font-size:13px;line-height:19px;font-weight:normal;color:#3b3f48;letter-spacing:-0.123px;">50301 - Máy móc, thiết bị chuyên dù...</span>
<span class="t" style="left:1240.31px;top:847.00px;font-size:13px;line-height:19px;font-weight:normal;color:#3b3f48;letter-spacing:-0.268px;">10,00</span>
<span class="t" style="left:1330.31px;top:847.00px;font-size:13px;line-height:19px;font-weight:normal;color:#3b3f48;letter-spacing:-0.268px;">10,00</span>
<span class="t" style="left:1383.11px;top:847.00px;font-size:13px;line-height:19px;font-weight:normal;color:#3b3f48;letter-spacing:-0.184px;">3030102 - Xe cứu thương có kết cấu...</span>
<span class="t" style="left:1657.71px;top:847.00px;font-size:13px;line-height:19px;font-weight:normal;color:#3b3f48;letter-spacing:-0.307px;">6,67</span>
<span class="t" style="left:1740.31px;top:847.00px;font-size:13px;line-height:19px;font-weight:normal;color:#3b3f48;letter-spacing:-0.268px;">15,00</span>
<div class="b" style="left:3px;top:871px;width:1908px;height:35px;background:#fff;"></div>
<div class="b" style="left:1908px;top:208px;width:3px;height:662px;background:#efefef;"></div>
<div class="b" style="left:1908px;top:208px;width:3px;height:624px;background:#cbcbcb;"></div>
<span class="t" style="left:9.13px;top:880.30px;font-size:13px;line-height:19px;font-weight:normal;color:#4a4a4a;letter-spacing:-0.142px;">Tổng số: </span>
<span class="t" style="left:61.84px;top:880.30px;font-size:13px;line-height:19px;font-weight:bold;color:#222;letter-spacing:0.359px;">247</span>
<span class="t" style="left:84.27px;top:880.30px;font-size:13px;line-height:19px;font-weight:normal;color:#4a4a4a;letter-spacing:-0.098px;"> bản ghi</span>
<span class="t" style="left:1566.91px;top:880.30px;font-size:13px;line-height:19px;font-weight:normal;color:#4a4a4a;letter-spacing:0.104px;">Số dòng/trang</span>
<span class="t" style="left:1660.95px;top:880.30px;font-size:13px;line-height:19px;font-weight:normal;color:#222;letter-spacing:-0.019px;">20</span>
<svg class="b" style="left:1687px;top:884px" width="12" height="10" viewBox="0 0 12 10"><path d="M1.8 2.6 L6 6.8 L10.2 2.6" fill="none" stroke="#111" stroke-width="2"/></svg>
<span class="t" style="left:1731.53px;top:881.87px;font-size:11.5px;line-height:17.5px;font-weight:normal;color:#aaaaaa;letter-spacing:0.000px;">&lt;</span>
<span class="t" style="left:1749.31px;top:880.30px;font-size:13px;line-height:19px;font-weight:normal;color:#4a4a4a;letter-spacing:-0.143px;">Trang</span>
<span class="t" style="left:1796.51px;top:880.30px;font-size:13px;line-height:19px;font-weight:normal;color:#222;letter-spacing:0.000px;">1</span>
<span class="t" style="left:1813.85px;top:880.30px;font-size:13px;line-height:19px;font-weight:normal;color:#4a4a4a;letter-spacing:0.000px;">2</span>
<span class="t" style="left:1830.50px;top:880.30px;font-size:13px;line-height:19px;font-weight:normal;color:#4a4a4a;letter-spacing:0.000px;">3</span>
<span class="t" style="left:1847.31px;top:880.30px;font-size:13px;line-height:19px;font-weight:normal;color:#4a4a4a;letter-spacing:-0.074px;">...</span>
<span class="t" style="left:1868.51px;top:880.30px;font-size:13px;line-height:19px;font-weight:normal;color:#4a4a4a;letter-spacing:-0.216px;">13</span>
<span class="t" style="left:1898.23px;top:881.87px;font-size:11.5px;line-height:17.5px;font-weight:normal;color:#4a4a4a;letter-spacing:0.000px;">&gt;</span>
<div class="b" style="left:1742px;top:927px;width:62px;height:30px;background:#fff;border:1px solid #d2d5df;border-radius:5px;"></div>
<span class="t" style="left:1761.63px;top:932.80px;font-size:13px;line-height:19px;font-weight:normal;color:#222;letter-spacing:-0.134px;-webkit-text-stroke:0.45px #222;">Hủy</span>
<div class="b" style="left:1818px;top:927px;width:79px;height:32px;background:#4361ee;border-radius:5px;"></div>
<span class="t" style="left:1834.15px;top:932.80px;font-size:13px;line-height:19px;font-weight:bold;color:#fff;letter-spacing:-0.307px;">Tiếp tục</span>
<div class="b" style="left:1771px;top:105px;width:123px;height:775px;border:3px solid #df1212;"></div>
<div class="b" style="left:1911px;top:0px;width:3px;height:968px;background:#a4a4a4;"></div>
<div class="b" style="left:0px;top:965px;width:1914px;height:3px;background:#a4a4a4;"></div>
</div></body></html>
